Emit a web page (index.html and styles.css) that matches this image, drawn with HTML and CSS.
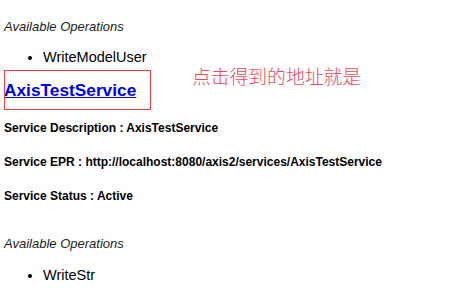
FILE: index.html
```html
<!DOCTYPE html>
<html>
<head>
<meta charset="utf-8">
<link rel="stylesheet" href="styles.css">
</head>
<body>
<div class="page">
  <p class="ops-title">Available Operations</p>
  <ul class="ops">
    <li>WriteModelUser</li>
  </ul>
  <div class="service-row">
    <div class="mark">
      <a class="service-link" href="#">AxisTestService</a>
    </div>
    <span class="note">点击得到的地址就是</span>
  </div>
  <p class="info">Service Description : AxisTestService</p>
  <p class="info">Service EPR : http://localhost:8080/axis2/services/AxisTestService</p>
  <p class="info">Service Status : Active</p>
  <p class="ops-title second">Available Operations</p>
  <ul class="ops second-list">
    <li>WriteStr</li>
  </ul>
</div>
</body>
</html>
```

FILE: styles.css
```css
html, body {
  margin: 0;
  padding: 0;
  background: #ffffff;
}

.page {
  padding: 19px 0 0 4px;
  font-family: "Liberation Sans", Arial, sans-serif;
  color: #000000;
}

.ops-title {
  margin: 0;
  font-size: 13px;
  line-height: 16px;
  font-style: italic;
  color: #222222;
}

.ops-title.second {
  margin-top: 33px;
}

.ops {
  margin: 14px 0 0 0;
  padding: 0 0 0 39px;
  font-size: 14.5px;
  line-height: 17px;
}

.ops.second-list {
  margin-top: 15px;
}

.ops li {
  margin: 0;
}

.service-row {
  display: flex;
  align-items: flex-start;
  margin-top: 4px;
}

.mark {
  position: relative;
  width: 145px;
  padding: 10px 0;
}

.mark::after {
  content: "";
  position: absolute;
  left: 0;
  top: 0;
  width: 145px;
  height: 38px;
  border: 1px solid #ff3b3b;
}

.service-link {
  display: block;
  font-size: 17.3px;
  line-height: 20px;
  font-weight: bold;
  color: #0000ee;
  text-decoration: underline;
}

.note {
  margin: -7px 0 0 43px;
  font-family: "Noto Sans CJK SC", sans-serif;
  font-size: 18.8px;
  line-height: 26px;
  color: #f2465a;
  font-weight: 300;
}

.info {
  margin: 11px 0 0 0;
  font-size: 12px;
  line-height: 14px;
  font-weight: bold;
}

.info + .info {
  margin-top: 20px;
}
```
